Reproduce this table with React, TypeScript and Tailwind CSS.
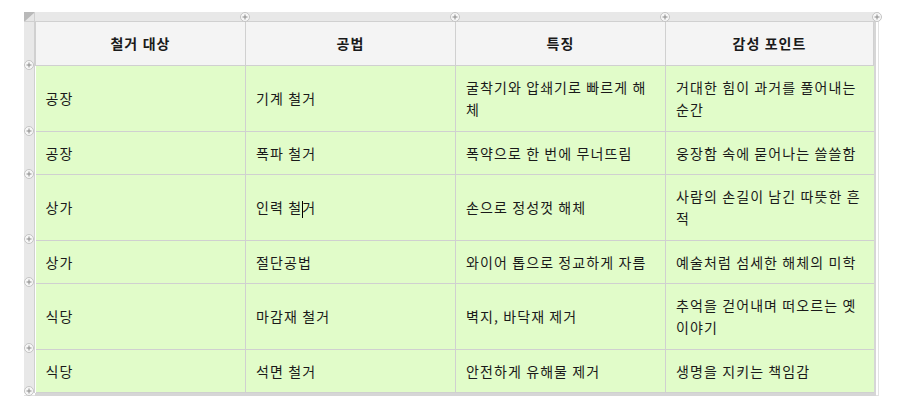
const rows: { target: string; method: React.ReactNode; feature: React.ReactNode; point: React.ReactNode; tall?: boolean }[] = [
  { target: "공장", method: "기계 철거", feature: <>굴착기와 압쇄기로 빠르게 해<br />체</>, point: <>거대한 힘이 과거를 풀어내는<br />순간</>, tall: true },
  { target: "공장", method: "폭파 철거", feature: "폭약으로 한 번에 무너뜨림", point: "웅장함 속에 묻어나는 쓸쓸함" },
  {
    target: "상가",
    method: <>인력 철<span className="inline-block w-px h-[17px] bg-black align-middle -mr-px" />거</>,
    feature: "손으로 정성껏 해체",
    point: <>사람의 손길이 남긴 따뜻한 흔<br />적</>,
    tall: true,
  },
  { target: "상가", method: "절단공법", feature: "와이어 톱으로 정교하게 자름", point: "예술처럼 섬세한 해체의 미학" },
  { target: "식당", method: "마감재 철거", feature: "벽지, 바닥재 제거", point: <>추억을 걷어내며 떠오르는 옛<br />이야기</>, tall: true },
  { target: "식당", method: "석면 철거", feature: "안전하게 유해물 제거", point: "생명을 지키는 책임감" },
];

const headers = ["철거 대상", "공법", "특징", "감성 포인트"];

// column handle x positions (relative to frame) and row handle y positions
const colHandles = ["left-[216px]", "left-[426px]", "left-[636px]", "left-[848px]"];
const rowHandles = ["top-[48px]", "top-[114px]", "top-[157px]", "top-[222px]", "top-[265px]", "top-[331px]", "top-[374px]"];

function Plus({ className }: { className: string }) {
  return (
    <div className={`absolute w-[10px] h-[10px] rounded-full bg-[#f7f7f7] border border-[#c4c4c4] flex items-center justify-center ${className}`}>
      <svg width="6" height="6" viewBox="0 0 6 6">
        <path d="M3 0.5v5M0.5 3h5" stroke="#8a8a8a" strokeWidth="1" />
      </svg>
    </div>
  );
}

const cell = "border border-[#d0d0d0] px-[10px] py-0 align-middle whitespace-nowrap";

export default function App() {
  return (
    <div className="w-[897px] h-[405px] bg-white pt-[12px] pl-[24px] text-[14px] tracking-[1.1px] text-[#1a1a1a] font-['Noto_Sans_CJK_KR','Noto_Sans',sans-serif]">
      <div className="relative w-[855px] h-[384px] border-r border-b border-[#e2e2e2]">
        <div className="flex h-[10px]">
          <div className="w-[11px] h-[10px] bg-[#e6e6e6] border-r border-b border-[#cfcfcf] relative overflow-hidden">
            <svg width="11" height="10" viewBox="0 0 11 10" className="absolute inset-0">
              <path d="M0 0h11L0 10z" fill="#b9b9b9" />
            </svg>
          </div>
          <div className="w-[841px] h-[10px] bg-[#e8e8e8] border-b border-[#d0d0d0]" />
        </div>
        <div className="flex">
          <div className="w-[11px] h-[371px] bg-[#e8e8e8] border-r border-[#d0d0d0]" />
          <div className="w-[841px] border-r-[3px] border-b-[3px] border-[#d6d6d6]">
            <table className="w-[838px] border-collapse table-fixed">
              <colgroup>
                <col className="w-[210px]" />
                <col className="w-[210px]" />
                <col className="w-[210px]" />
                <col className="w-[208px]" />
              </colgroup>
              <thead>
                <tr className="h-[43px] bg-[#f4f4f4]">
                  {headers.map((h) => (
                    <th key={h} className={`${cell} border-t-0 font-bold text-center`}>{h}</th>
                  ))}
                </tr>
              </thead>
              <tbody>
                {rows.map((r, i) => (
                  <tr key={i} className={`${r.tall ? "h-[66px]" : "h-[43px]"} bg-[#e1fcc9] leading-[22px]`}>
                    <td className={`${cell} border-l-0`}>{r.target}</td>
                    <td className={cell}>{r.method}</td>
                    <td className={cell}>{r.feature}</td>
                    <td className={`${cell} border-r-0`}>{r.point}</td>
                  </tr>
                ))}
              </tbody>
            </table>
          </div>
        </div>
        {colHandles.map((x) => (
          <Plus key={x} className={`${x} top-[0px]`} />
        ))}
        {rowHandles.map((y) => (
          <Plus key={y} className={`left-[0px] ${y}`} />
        ))}
      </div>
    </div>
  );
}
